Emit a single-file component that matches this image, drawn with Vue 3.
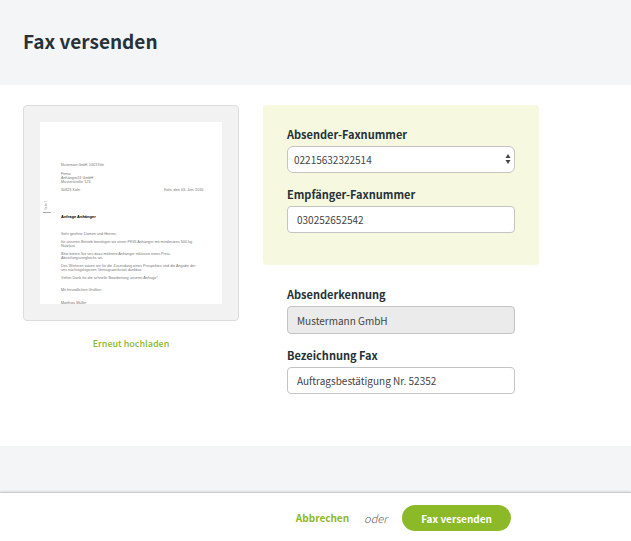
<template>
  <div class="page">
    <header class="page-header">
      <h1>Fax versenden</h1>
    </header>

    <main class="content">
      <form id="fax-form" class="layout" @submit.prevent>
        <section class="preview">
          <div class="preview-frame">
            <svg class="letter" viewBox="0 0 182 182" role="img" aria-label="Vorschau">
              <rect width="182" height="182" fill="#fff" />
              <text
                v-for="line in letterLines"
                :key="line.text"
                :x="line.x || 21"
                :y="line.y"
                :class="{ subject: line.subject }"
                :font-size="line.size || 3.75"
              >{{ line.text }}</text>
              <text class="margin-note" transform="translate(7 88) rotate(-90)" font-size="3">Seite 1</text>
              <path d="M3 90.5h8" stroke="#aaa" stroke-width="1" />
            </svg>
          </div>
          <a href="#" class="reupload" @click.prevent>Erneut hochladen</a>
        </section>

        <div class="fields">
          <div class="numbers">
            <div class="field">
              <label for="sender">Absender-Faxnummer</label>
              <div class="select-wrap">
                <select id="sender" v-model="sender">
                  <option value="02215632322514">02215632322514</option>
                </select>
                <svg class="arrows" viewBox="0 0 6 10" aria-hidden="true">
                  <path d="M3 0L5.5 4h-5zM3 10L.5 6h5z" fill="#444" />
                </svg>
              </div>
            </div>
            <div class="field">
              <label for="recipient">Empfänger-Faxnummer</label>
              <input id="recipient" v-model="recipient" type="text">
            </div>
          </div>

          <div class="details">
            <div class="field">
              <label for="ident">Absenderkennung</label>
              <input id="ident" v-model="ident" type="text" disabled>
            </div>
            <div class="field">
              <label for="title">Bezeichnung Fax</label>
              <input id="title" v-model="title" type="text">
            </div>
          </div>
        </div>
      </form>
    </main>

    <footer class="action-bar">
      <div class="actions">
        <a href="#" class="cancel" @click.prevent>Abbrechen</a>
        <span class="or">oder</span>
        <button type="submit" form="fax-form">Fax versenden</button>
      </div>
    </footer>
  </div>
</template>

<script setup>
import { ref } from 'vue'

const sender = ref('02215632322514')
const recipient = ref('030252652542')
const ident = ref('Mustermann GmbH')
const title = ref('Auftragsbestätigung Nr. 52352')

// Text of the letter shown in the preview
const letterLines = [
  { y: 44, size: 3, text: 'Mustermann GmbH, 50823 Köln' },
  { y: 53, text: 'Firma' },
  { y: 57, text: 'Anhänger24 GmbH' },
  { y: 61, text: 'Musterstraße 123' },
  { y: 69, text: '50823 Köln' },
  { x: 124, y: 69, text: 'Köln, den 03. Juni 2016' },
  { y: 96, size: 4, text: 'Anfrage Anhänger', subject: true },
  { y: 113, text: 'Sehr geehrte Damen und Herren,' },
  { y: 121, text: 'für unseren Betrieb benötigen wir einen PKW-Anhänger mit mindestens 500 kg' },
  { y: 125, text: 'Nutzlast.' },
  { y: 133, text: 'Bitte bieten Sie uns dazu mehrere Anhänger inklusive eines Preis-' },
  { y: 137, text: 'Abstufungsvergleichs an.' },
  { y: 145, text: 'Des Weiteren wären wir für die Zusendung eines Prospektes und die Angabe der' },
  { y: 149, text: 'uns nächstgelegenen Vertragswerkstatt dankbar.' },
  { y: 157, text: 'Vielen Dank für die schnelle Bearbeitung unserer Anfrage!' },
  { y: 169, text: 'Mit freundlichen Grüßen' },
  { y: 182, text: 'Matthias Müller' }
]
</script>

<style>
body {
  margin: 0;
  background: #f4f5f7;
}
</style>

<style scoped>
.page {
  min-height: 100vh;
  display: flex;
  flex-direction: column;
  font-family: "Noto Sans CJK SC", "Noto Sans", sans-serif;
  font-size: 11px;
  line-height: 24px;
  color: #263238;
}

.page * {
  box-sizing: border-box;
}

.page-header {
  padding: 23px 23px 26px;
}

h1 {
  margin: 0;
  font-size: 19px;
  line-height: 36px;
  font-weight: 700;
}

.content {
  padding: 20px 23px 52px;
  background: #fff;
}

.layout {
  display: grid;
  grid-template-columns: 216px minmax(0, 276px);
  gap: 24px;
}

.preview {
  text-align: center;
}

.preview-frame {
  padding: 16px;
  border: 1px solid #dcdcdc;
  border-radius: 4px;
  background: #f2f2f2;
}

.letter {
  display: block;
  width: 100%;
  font-family: "Liberation Sans", Arial, sans-serif;
  fill: #777;
}

.subject {
  font-weight: 700;
  fill: #000;
}

.margin-note {
  fill: #999;
}

a {
  color: #8bb927;
  font-weight: 700;
  text-decoration: none;
}

.reupload {
  display: inline-block;
  margin-top: 11px;
  font-size: 9px;
  font-weight: 500;
}

.numbers {
  padding: 17px 24px 32px;
  border-radius: 4px;
  background: #f6f9e0;
}

.details {
  padding: 17px 24px 0;
}

.field + .field {
  margin-top: 9px;
}

label {
  display: block;
  font-weight: 700;
}

input,
select {
  display: block;
  width: 100%;
  height: 27px;
  margin: 0;
  padding: 0 9px;
  border: 1px solid #c4c4c4;
  border-radius: 4px;
  background: #fff;
  color: #444;
  font-family: inherit;
  font-size: 10px;
}

input:disabled {
  height: 28px;
  background: #ebebeb;
}

.select-wrap {
  position: relative;
}

select {
  appearance: none;
  padding: 0 6px;
  border-radius: 6px;
}

.arrows {
  position: absolute;
  top: 8px;
  right: 4px;
  width: 6px;
  height: 10px;
  pointer-events: none;
}

.action-bar {
  margin-top: auto;
  padding: 12px 23px 10px;
  border-top: 1px solid #cbcccf;
  background: #fff;
  box-shadow: 0 -1px 2px rgba(0, 0, 0, 0.1);
}

.actions {
  display: flex;
  align-items: center;
  justify-content: flex-end;
  gap: 15px;
  max-width: 488px;
}

.cancel {
  font-size: 10px;
}

.or {
  color: #555;
  font-style: italic;
  font-weight: 300;
}

button {
  height: 26px;
  padding: 0 19px;
  border: 0;
  border-radius: 13px;
  background: #8bb927;
  color: #fff;
  font-family: inherit;
  font-size: 10px;
  font-weight: 700;
}
</style>
